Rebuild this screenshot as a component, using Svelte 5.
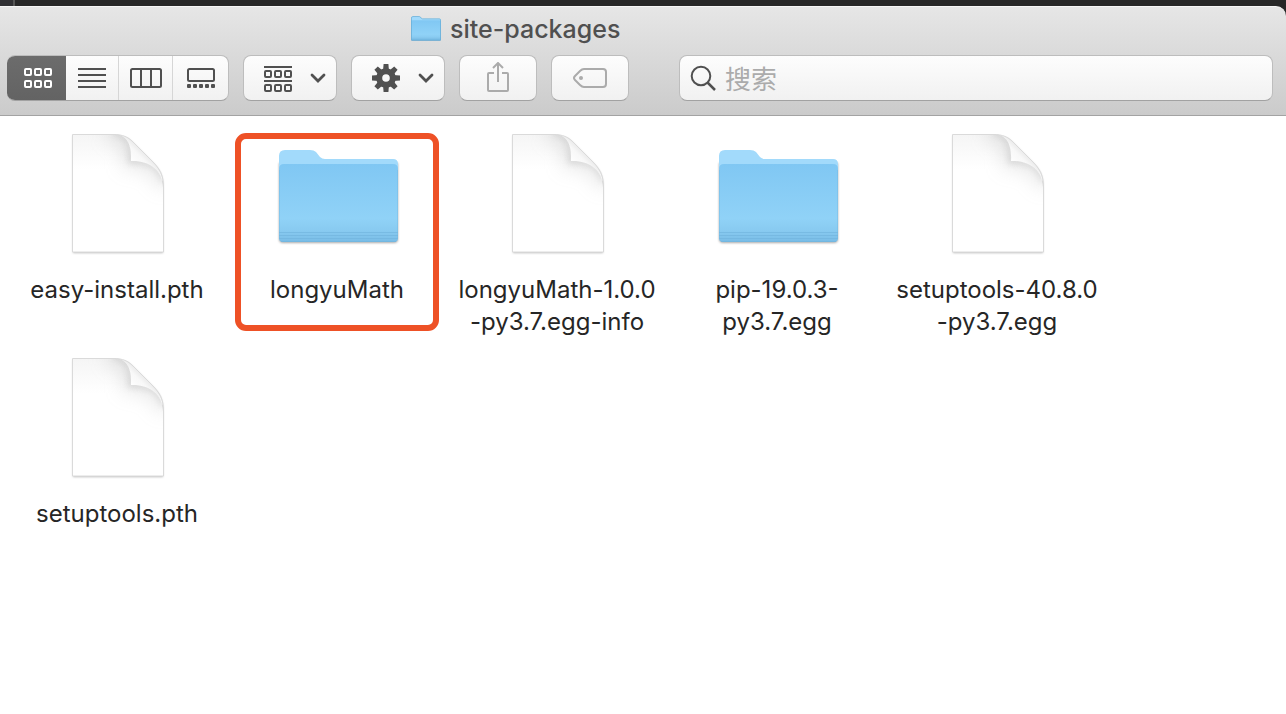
<script>
  const files = [
    { kind: 'page', lines: ['easy-install.pth'] },
    { kind: 'folder', lines: ['longyuMath'], marked: true },
    { kind: 'page', lines: ['longyuMath-1.0.0', '-py3.7.egg-info'] },
    { kind: 'folder', lines: ['pip-19.0.3-', 'py3.7.egg'] },
    { kind: 'page', lines: ['setuptools-40.8.0', '-py3.7.egg'] },
    { kind: 'page', lines: ['setuptools.pth'] }
  ];
  const views = ['icons', 'list', 'columns', 'gallery'];
  let view = $state('icons');
  let query = $state('');
  const teeth = [0, 45, 90, 135, 180, 225, 270, 315];
</script>

{#snippet folder()}
  <path class="folder-shadow" d="M6 30H125V106Q125 110 121 110H10Q6 110 6 106Z" />
  <path fill="#a2dafb" d="M6 23Q6 17 12 17H37Q41 17 43 19L47 24Q49 26 52 26H120Q125 26 125 31V60H6Z" />
  <path fill="url(#folder-front)" d="M6 36Q6 31 11 31H120Q125 31 125 36V105Q125 109 121 109H10Q6 109 6 105Z" />
  <path stroke="#6fb2dc" stroke-opacity=".6" d="M6 99.5H125M6 102.5H125M6 105.5H125M8 108.5H123" />
  <path fill="none" stroke="#73b6df" stroke-opacity=".4" d="M6.5 37V105M124.5 37V105" />
{/snippet}

{#snippet chevron()}
  <svg class="chevron" width="16" height="10" viewBox="0 0 16 10" aria-hidden="true">
    <path d="M2 2L8 8L14 2" fill="none" stroke="#505050" stroke-width="2.8" stroke-linecap="round" />
  </svg>
{/snippet}

<svg class="defs" width="0" height="0" aria-hidden="true">
  <defs>
    <linearGradient id="folder-front" x1="0" y1="0" x2="0" y2="1">
      <stop offset="0" stop-color="#80c7f3" />
      <stop offset=".7" stop-color="#90d2f7" />
      <stop offset=".86" stop-color="#88caf0" />
      <stop offset="1" stop-color="#78bce6" />
    </linearGradient>
    <linearGradient id="page-top" x1="0" y1="0" x2="0" y2="1">
      <stop offset="0" stop-color="#f5f5f5" />
      <stop offset=".3" stop-color="#ffffff" />
    </linearGradient>
    <linearGradient id="page-fold" gradientUnits="userSpaceOnUse" x1="76" y1="29" x2="90" y2="15">
      <stop offset="0" stop-color="#ffffff" />
      <stop offset=".6" stop-color="#f8f8f8" />
      <stop offset="1" stop-color="#e4e4e4" />
    </linearGradient>
    <clipPath id="page-clip">
      <path d="M20 1H60C74 1 79 12 78 28C94 27 110 36 110 54V119H20Z" />
    </clipPath>
  </defs>
</svg>

<main>
  <div class="frame">
    <header>
      <h1>
        <svg width="30" height="26" viewBox="5 15 121 100" preserveAspectRatio="none" aria-hidden="true">
          {@render folder()}
          <path d="M7 108V23Q7 17 12 17H37Q41 17 43 19L47 24Q49 26 52 26H120Q124 26 124 31V108Z" fill="none" stroke="#67afd9" stroke-width="3" />
        </svg>
        <span>site-packages</span>
      </h1>
      <div class="toolbar">
        <div class="segments">
          {#each views as name}
            <button class:active={view === name} aria-label={name} aria-pressed={view === name} onclick={() => (view = name)}>
              <svg width="32" height="20" viewBox="0 0 32 20" fill="none" stroke="currentColor" stroke-width="2" aria-hidden="true">
                {#if name === 'icons'}
                  {#each [3, 13, 23] as x}
                    <rect {x} y="1" width="6" height="6" rx="1" />
                    <rect {x} y="13" width="6" height="6" rx="1" />
                  {/each}
                {:else if name === 'list'}
                  <path d="M2 1H30M2 7H30M2 13H30M2 19H30" />
                {:else if name === 'columns'}
                  <rect x="1" y="1" width="30" height="18" rx="1.5" />
                  <path d="M11 1V19M21 1V19" />
                {:else}
                  <rect x="3" y="1" width="26" height="12" rx="1.5" />
                  {#each [2, 8, 14, 20, 26] as x}
                    <rect {x} y="16" width="4" height="4" rx="1" fill="currentColor" stroke="none" />
                  {/each}
                {/if}
              </svg>
            </button>
          {/each}
        </div>
        <button class="box menu" aria-label="Group" aria-haspopup="menu">
          <svg width="28" height="28" viewBox="0 -2 28 28" fill="none" stroke="currentColor" stroke-width="2" aria-hidden="true">
            <path d="M0 1H28M0 15H28" />
            {#each [1, 11, 21] as x}
              <rect {x} y="5" width="6" height="6" rx="1" />
              <rect {x} y="19" width="6" height="6" rx="1" />
            {/each}
          </svg>
          {@render chevron()}
        </button>
        <button class="box menu" aria-label="Action" aria-haspopup="menu">
          <svg width="28" height="28" viewBox="-14 -14 28 28" aria-hidden="true">
            {#each teeth as angle}
              <path d="M-3 -7L-2.4 -14H2.4L3 -7Z" fill="currentColor" transform="rotate({angle})" />
            {/each}
            <circle r="6.8" fill="none" stroke="currentColor" stroke-width="6" />
          </svg>
          {@render chevron()}
        </button>
        <button class="box plain" aria-label="Share" disabled>
          <svg width="24" height="32" viewBox="0 0 24 32" fill="none" stroke="currentColor" stroke-width="2" aria-hidden="true">
            <path d="M8 11H3Q2 11 2 12V28Q2 29 3 29H21Q22 29 22 28V12Q22 11 21 11H16M12 20V1M7 6L12 1L17 6" />
          </svg>
        </button>
        <button class="box plain" aria-label="Tags" disabled>
          <svg width="34" height="22" viewBox="0 0 34 22" fill="none" stroke="currentColor" stroke-width="2" aria-hidden="true">
            <path d="M11 2H30Q33 2 33 5V17Q33 20 30 20H11Q9 20 7 18L2 13Q0 11 2 9L7 4Q9 2 11 2Z" />
            <circle cx="8" cy="11" r="2" fill="currentColor" stroke="none" />
          </svg>
        </button>
        <label class="box search">
          <svg width="28" height="28" viewBox="0 0 28 28" fill="none" stroke="#505050" stroke-width="2" aria-hidden="true">
            <circle cx="12" cy="12" r="9.3" />
            <path d="M18.5 18.5L26 26" stroke-width="2.5" />
          </svg>
          <input type="text" placeholder="搜索" aria-label="搜索" bind:value={query} />
        </label>
      </div>
    </header>
  </div>

  <ul class="files">
    {#each files as file}
      <li class:marked={file.marked}>
        <svg width="128" height="122" viewBox="0 0 128 122" aria-hidden="true">
          {#if file.kind === 'folder'}
            {@render folder()}
          {:else}
            <path class="page-shadow" d="M20 2H60C70 2 75 4 80 9L99 28C107 36 110 42 110 54V119H20Z" />
            <path fill="url(#page-fold)" d="M60 1C70 1 75 4 80 9L99 28C104 33 108 38 110 48L78 29Z" />
            <g clip-path="url(#page-clip)">
              <rect x="19" y="1" width="92" height="118" fill="url(#page-top)" />
              <path class="curl wide" d="M54 0C72 0 79 12 78 28C94 27 109 36 113 54" />
              <path class="curl" d="M60 0C74 1 79 12 78 28C94 27 108 35 111 48" />
            </g>
            <path fill="none" stroke="#dadada" d="M19.5 1.5H60C70 1.5 75 4 80 9L99 28C107 36 110.5 42 110.5 54V119H19.5Z" />
          {/if}
        </svg>
        <span>{#each file.lines as line, i}{#if i}<br />{/if}{line}{/each}</span>
      </li>
    {/each}
  </ul>
</main>

<style>
  :global(body) {
    margin: 0;
    background: #fff;
    font-family: Inter, "Noto Sans CJK SC", sans-serif;
  }
  .defs { position: absolute; }
  /* The strip of desktop that shows above the window and behind its corner. */
  .frame {
    padding-top: 6px;
    background: linear-gradient(90deg, #303033 13px, #555 13px, #555 15px, #272727 15px);
  }
  header {
    box-sizing: border-box;
    padding: 0 13px 14px 7px;
    border-top: 1px solid #f6f6f6;
    border-bottom: 1px solid #a3a3a3;
    border-top-right-radius: 10px;
    border-bottom-right-radius: 0;
    background: linear-gradient(#e6e6e6, #cbcbcb);
  }
  h1 {
    display: flex;
    align-items: center;
    gap: 9px;
    height: 48px;
    margin: 0;
    padding: 0 0 4px 404px;
    box-sizing: border-box;
    color: #505050;
    font-size: 25px;
    font-weight: 500;
    line-height: 32px;
  }
  h1 svg { flex: none; }
  .toolbar {
    display: flex;
    gap: 14px;
  }
  button {
    display: flex;
    align-items: center;
    justify-content: center;
    box-sizing: border-box;
    margin: 0;
    padding: 0;
    border: 0;
    background: none;
    color: #505050;
    font: inherit;
  }
  button svg { flex: none; }
  .segments, .box {
    box-sizing: border-box;
    height: 46px;
    border: 1px solid #bdbdbd;
    border-bottom-color: #a2a2a2;
    border-radius: 8px;
    background: linear-gradient(#fdfdfd, #f1f1f1);
  }
  .segments {
    display: flex;
    width: 222px;
    overflow: hidden;
    border-width: 1px 1px 1px 0;
  }
  .segments button { flex: 0 0 54px; border-left: 1px solid #d6d6d6; }
  .segments button:first-child { flex: 0 0 59px; border: 0; padding-left: 3px; }
  .segments button:nth-child(2) { flex: 0 0 52px; border: 0; }
  .segments button:last-child { flex: 1; }
  .segments .active {
    background: linear-gradient(#6c6c6c, #636363);
    color: #fff;
  }
  .menu { width: 94px; gap: 18px; padding-left: 10px; }
  .plain { width: 78px; color: #ababab; }
  .search {
    flex: 1;
    display: flex;
    align-items: center;
    gap: 8px;
    margin-left: 36px;
    padding-left: 9px;
  }
  .search svg { flex: none; }
  input {
    flex: 1;
    min-width: 0;
    height: 40px;
    padding: 2px 0 0;
    border: 0;
    outline: 0;
    background: none;
    color: #333;
    font: 26px/36px Inter, "Noto Sans CJK SC", sans-serif;
  }
  input::placeholder { color: #ababab; opacity: 1; }
  .files {
    display: grid;
    grid-template-columns: repeat(auto-fill, 220px);
    grid-auto-rows: 224px;
    margin: 0;
    padding: 17px 7px;
    list-style: none;
  }
  li {
    position: relative;
    display: flex;
    flex-direction: column;
    align-items: center;
    justify-self: center;
    align-self: start;
    gap: 19px;
    width: 204px;
    min-height: 198px;
    color: #262626;
    font-size: 24px;
    line-height: 32px;
    text-align: center;
    white-space: nowrap;
  }
  .marked::after {
    content: "";
    position: absolute;
    inset: 0;
    border: 6px solid #ee5126;
    border-radius: 11px;
  }
  .folder-shadow { fill: #aaa; filter: blur(1px); }
  .page-shadow { fill: #ccc; filter: drop-shadow(0 1px 1px #bbb); }
  .curl { fill: none; stroke: #999; stroke-opacity: .35; stroke-width: 4; filter: blur(3px); }
  .wide { stroke-opacity: .22; stroke-width: 16; filter: blur(9px); }
</style>
